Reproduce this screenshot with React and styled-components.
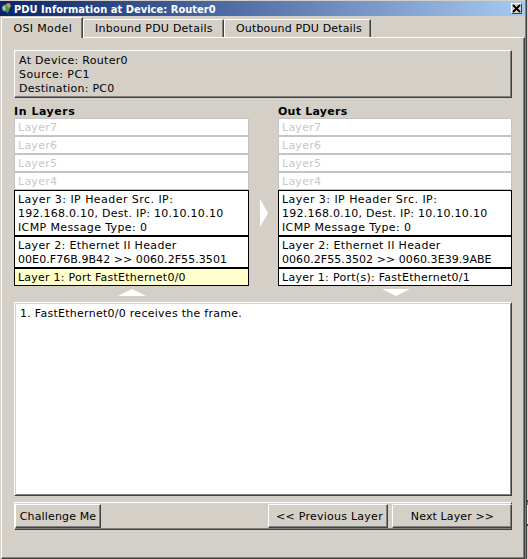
import React from 'react';
import styled, { createGlobalStyle } from 'styled-components';

const Global = createGlobalStyle`
  * { box-sizing: border-box; }
  body {
    margin: 0; overflow: hidden;
    background: linear-gradient(#d4d0c8 500px, #404040 500px 502px, #808080 502px 505px,
      #f0eeea 505px 524px, #404040 524px 526px, #d4d0c8 526px);
  }
`;
const Window = styled.div`
  width: 527px; height: 559px; display: flex; flex-direction: column;
  padding-top: 1px; background: #d4d0c8; color: #000;
  border-right: 1px solid #404040;
  box-shadow: inset -1px 0 #808080;
  font: 11px/14px "DejaVu Sans", Verdana, sans-serif;
  white-space: nowrap;
`;
const Text = styled.span`
  display: block;
  letter-spacing: ${(p) => p.$ls || 0}px;
`;
const TitleBar = styled.header`
  height: 15px; width: 525px; display: flex; align-items: center; padding: 0 3px 0 2px;
  background: linear-gradient(90deg, #0a246a, #a6caf0);
  color: #fff; font: bold 11px/15px "DejaVu Sans Condensed", "DejaVu Sans", sans-serif;
`;
const TitleText = styled(Text)`flex: 1; margin-left: 2px; padding-top: 1px;`;
const CloseButton = styled.button`
  width: 11px; height: 11px; padding: 0; border: 1px solid; display: flex;
  border-color: #fff #404040 #404040 #fff; background: #d4d0c8;
`;
const Tabs = styled.nav`
  display: flex; align-items: flex-end; height: 21px; padding-left: 1px; width: 524px;
`;
const Tab = styled.div`
  width: ${(p) => p.$w}px; height: ${(p) => (p.$active ? 20 : 18)}px;
  margin-bottom: ${(p) => (p.$active ? -1 : 0)}px;
  padding: ${(p) => (p.$active ? 4 : 2)}px 0 0 ${(p) => p.$pad}px;
  border-top: 1px solid #fff; border-left: 1px solid #fff; border-right: 1px solid #404040;
  border-radius: 2px 1px 0 0; box-shadow: inset -1px 0 #808080;
  background: #d4d0c8;
  ${(p) => p.$active && 'position: relative; height: 21px;'}
`;
const Pane = styled.main`
  margin-left: 1px; width: 524px; height: 522px; padding: 12px 0 0 12px;
  border: 1px solid; border-color: #fff #404040 #404040 #fff;
  box-shadow: inset -1px -1px #808080;
  display: flex; flex-direction: column;
`;
const Info = styled.section`
  width: 498px; height: 48px; padding: 3px 4px 0;
  border: 1px solid; border-color: #fff #404040 #404040 #fff;
  box-shadow: inset -1px -1px #808080;
`;
const Layers = styled.section`
  display: flex; height: 204px; padding-top: 6px;
`;
const Column = styled.div`
  width: ${(p) => p.$w}px; display: flex; flex-direction: column;
`;
const Heading = styled(Text)`font-weight: bold; height: 14px; padding-top: 1px;`;
const Layer = styled.div`
  border: 1px solid ${(p) => (p.$off ? '#c4c4c4' : '#000')};
  color: ${(p) => (p.$off ? '#c8c8c8' : '#000')};
  background: ${(p) => (p.$current ? '#ffffcc' : '#fff')};
  padding: 2px 3px 0;
`;
const Between = styled.div`
  width: ${(p) => p.$w}px; padding: 95px 0 0 11px;
`;
const Arrow = styled.svg`
  display: block; flex: none; fill: #fff;
  margin: ${(p) => p.$m || 0};
`;
const Description = styled.section`
  width: 498px; height: 194px; padding: 4px 5px; background: #fff;
  border: 1px solid; border-color: #fff #404040 #404040 #fff;
  box-shadow: inset 1px 1px #d4d0c8, inset -1px -1px #808080;
`;
const ButtonBar = styled.footer`
  width: 498px; height: 28px; margin-top: 6px; padding-top: 1px;
  display: flex; border: 1px solid; border-color: #fff #404040 #404040 #fff;
  box-shadow: inset 0 -1px #808080;
`;
const Button = styled.button`
  width: ${(p) => p.$w}px; height: 24px; padding: 1px 0 0 ${(p) => p.$pad || 0}px;
  margin-left: ${(p) => p.$ml || 0}; margin-right: ${(p) => p.$mr || 0};
  display: flex; align-items: center; justify-content: center;
  font: inherit; color: #000; background: #d4d0c8;
  border: 1px solid; border-color: #fff #404040 #404040 #fff;
  box-shadow: inset -1px -1px #808080;
`;

const emptyLayers = ['Layer7', 'Layer6', 'Layer5', 'Layer4'];
const ipLines = [
  ['Layer 3: IP Header Src. IP:', 0.45],
  ['192.168.0.10, Dest. IP: 10.10.10.10', 0.26],
  ['ICMP Message Type: 0', 0.38],
];
const inLayers = [
  ipLines,
  [['Layer 2: Ethernet II Header', 0.35], ['00E0.F76B.9B42 >> 0060.2F55.3501', 0.06]],
  [['Layer 1: Port FastEthernet0/0', 0.24]],
];
const outLayers = [
  ipLines,
  [['Layer 2: Ethernet II Header', 0.35], ['0060.2F55.3502 >> 0060.3E39.9ABE', 0.06]],
  [['Layer 1: Port(s): FastEthernet0/1', 0.28]],
];

function Stack({ title, spacing, layers, width, current, arrow }) {
  return (
    <Column $w={width}>
      <Heading $ls={spacing}>{title}</Heading>
      {emptyLayers.map((l) => <Layer key={l} $off><Text $ls={0.25}>{l}</Text></Layer>)}
      {layers.map((lines, i) => (
        <Layer key={i} $current={i === current}>
          {lines.map(([t, ls]) => <Text key={t} $ls={ls}>{t}</Text>)}
        </Layer>
      ))}
      {arrow}
    </Column>
  );
}

export default function App() {
  return (
    <>
      <Global />
      <Window>
        <TitleBar>
          <svg width="10" height="11" viewBox="0 0 10 11">
            <circle cx="4" cy="5" r="3.4" fill="#54806a" />
            <path d="M0 4 3 2 4 7 1 8Z" fill="#a9c5b4" />
            <path d="M4 1 7 0 9 2 8 5 5 4Z" fill="#c99a55" />
            <path d="M4 5 8 5 6 10 3 8Z" fill="#3e9b46" />
          </svg>
          <TitleText $ls={0.04}>PDU Information at Device: Router0</TitleText>
          <CloseButton aria-label="Close">
            <svg width="9" height="9" viewBox="0 0 9 9"><path d="M1 1 8 8M8 1 1 8" stroke="#000" strokeWidth="1.8" /></svg>
          </CloseButton>
        </TitleBar>
        <Tabs>
          <Tab $w={82} $pad={11.5} $active><Text $ls={0.35}>OSI Model</Text></Tab>
          <Tab $w={141} $pad={11}><Text $ls={0.24}>Inbound PDU Details</Text></Tab>
          <Tab $w={147} $pad={11}><Text $ls={0.15}>Outbound PDU Details</Text></Tab>
        </Tabs>
        <Pane>
          <Info>
            <Text $ls={0.3}>At Device: Router0</Text>
            <Text $ls={0.42}>Source: PC1</Text>
            <Text $ls={0.24}>Destination: PC0</Text>
          </Info>
          <Layers>
            <Stack title="In Layers" spacing={0.55} layers={inLayers} width={235} current={2}
              arrow={<Arrow $m="3px 0 0 104px" width="28" height="7"><path d="M0 7 14 0 28 7Z" /></Arrow>} />
            <Between $w={29}>
              <Arrow width="8" height="28"><path d="M0 0 8 14 0 28Z" /></Arrow>
            </Between>
            <Stack title="Out Layers" spacing={0.25} layers={outLayers} width={234}
              arrow={<Arrow $m="3px 0 0 104px" width="28" height="7"><path d="M0 0 14 7 28 0Z" /></Arrow>} />
          </Layers>
          <Description><Text $ls={0.27}>1. FastEthernet0/0 receives the frame.</Text></Description>
          <ButtonBar>
            <Button $w={86}><Text $ls={0.15}>Challenge Me</Text></Button>
            <Button $w={120} $ml="auto" $pad={3}><Text $ls={0.25}>&lt;&lt; Previous Layer</Text></Button>
            <Button $w={120} $ml="4px" $mr="-1px" $pad={1}><Text $ls={0.12}>Next Layer &gt;&gt;</Text></Button>
          </ButtonBar>
        </Pane>
      </Window>
    </>
  );
}
